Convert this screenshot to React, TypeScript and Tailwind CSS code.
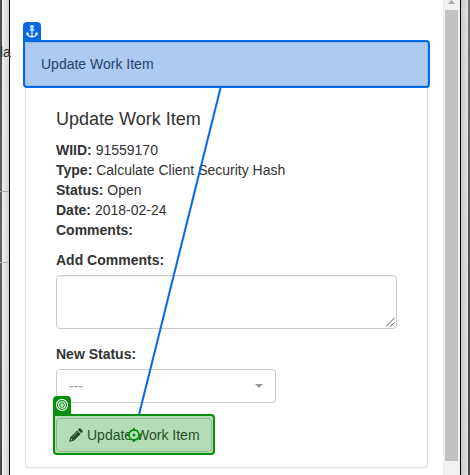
import React from "react";

function Edge({ side }: { side: "left" | "right" }) {
  if (side === "left") {
    return (
      <div className="relative flex w-[10px] shrink-0">
        <div className="w-[2px] bg-linear-to-b from-[#4c4c4c] via-[#666] to-[#484848]" />
        <div className="w-[7px] bg-linear-to-r from-[#f0f0f0] to-[#d2d2d2]" />
        <div className="w-px bg-black" />
        <div className="absolute left-0 top-[191px] h-px w-[9px] bg-[#aaa]" />
        <div className="absolute left-0 top-[262px] h-px w-[9px] bg-[#b5b5b5]" />
        <span className="absolute -left-px top-[42px] pl-px text-[14px] leading-5">la</span>
      </div>
    );
  }
  return (
    <div className="flex w-[10px] shrink-0">
      <div className="w-px bg-black" />
      <div className="w-[7px] bg-linear-to-r from-[#cacaca] to-[#e0e1e3]" />
      <div className="w-[2px] bg-linear-to-b from-[#777] via-[#555] to-[#484848]" />
    </div>
  );
}

function Scrollbar() {
  return (
    <div className="flex w-[17px] shrink-0 flex-col items-center bg-[#f1f1f1]">
      <svg width="15" height="10" viewBox="0 0 15 10" className="shrink-0">
        <path d="M4 4 L7.5 0 L11 4Z" fill="#a3a3a3" />
      </svg>
      <div className="h-[451px] w-[13px] bg-[#c1c1c1]" />
    </div>
  );
}

const details = [
  ["WIID:", "91559170"],
  ["Type:", "Calculate Client Security Hash"],
  ["Status:", "Open"],
  ["Date:", "2018-02-24"],
  ["Comments:", ""],
];

function Overlay() {
  return (
    <>
      <div className="absolute left-[23px] top-[40px] h-[48px] w-[407px] rounded-[4px] rounded-tl-none border-2 border-[#0568e4] bg-[#0568e4]/30" />
      <div className="absolute left-[23px] top-[22px] flex h-[19px] w-[18px] justify-center rounded-t-[4px] bg-[#0568e4] pt-[3px]">
        <svg width="12" height="13" viewBox="0 0 12 13" fill="none" stroke="#fff" strokeWidth="1.2">
          <circle cx="6" cy="1.9" r="1.3" />
          <path d="M6 3.2V12M3.5 5h5M1.2 8.2C1.5 10.6 3.2 11.6 6 12c2.8-.4 4.5-1.4 4.8-3.8M.5 9.6l.7-1.6 1.6 1.1M11.5 9.6l-.7-1.6-1.6 1.1" />
        </svg>
      </div>
      <svg className="absolute left-0 top-0" width="470" height="475">
        <path d="M220.5 88L139.2 414" stroke="#0568e4" strokeWidth="2" />
      </svg>
      <div className="absolute left-[53px] top-[414px] h-[41px] w-[162px] rounded-[4px] rounded-tl-none border-2 border-[#068f0c] bg-[#068f0c]/30" />
      <div className="absolute left-[53px] top-[396px] flex h-[19px] w-[18px] justify-center rounded-t-[4px] bg-[#068f0c] pt-[3px]">
        <svg width="13" height="13" viewBox="0 0 13 13" fill="none" stroke="#fff" strokeWidth="1.1">
          <circle cx="6" cy="6" r="5.5" />
          <circle cx="6" cy="6" r="3.3" />
          <circle cx="6" cy="6" r="1.1" />
        </svg>
      </div>
      <svg className="absolute left-[127px] top-[428px]" width="14" height="14" viewBox="0 0 14 14">
        <circle cx="7" cy="7" r="5" fill="#b7dfb9" stroke="#068f0c" strokeWidth="1.8" />
        <path d="M7 0v2.8M7 11.2V14M0 7h2.8M11.2 7H14" stroke="#068f0c" strokeWidth="1.9" />
        <circle cx="7" cy="7" r="1.5" fill="#068f0c" />
      </svg>
    </>
  );
}

export default function App() {
  return (
    <div className="relative flex h-[475px] w-[470px] overflow-hidden bg-white font-['Liberation_Sans',Arial,sans-serif] text-[14px] leading-5 text-[#333]">
      <Edge side="left" />
      <main className="min-w-0 flex-1 pl-[15px] pr-[15px] pt-[42px]">
        <section className="h-[426px] rounded-[4px] border border-[#ddd] shadow-[0_1px_1px_rgba(0,0,0,0.05)]">
          <header className="flex h-[43px] items-center rounded-t-[3px] border-b border-[#ddd] bg-[#f5f5f5] px-[15px]">
            Update Work Item
          </header>
          <div className="px-[30px] pt-[23px]">
            <h2 className="mb-[11px] text-[18px] leading-[20px]">Update Work Item</h2>
            {details.map(([label, value]) => (
              <p key={label}>
                <b>{label}</b> {value}
              </p>
            ))}
            <label className="mb-[5px] mt-[10px] block font-bold">Add Comments:</label>
            <div className="flex h-[54px] w-[341px] items-end justify-end rounded-[4px] border border-[#ccc] p-px shadow-[inset_0_1px_1px_rgba(0,0,0,0.075)]">
              <svg width="9" height="9" viewBox="0 0 9 9">
                <path d="M0 8.5L8.5 0M4.5 8.5L8.5 4.5" stroke="#555" strokeWidth="1" />
              </svg>
            </div>
            <label className="mb-[5px] mt-[15px] block font-bold">New Status:</label>
            <div className="flex h-[34px] w-[220px] items-center justify-between rounded-[4px] border border-[#ccc] px-3 text-[#999]">
              <span>---</span>
              <span className="border-x-4 border-t-4 border-x-transparent border-t-[#999]" />
            </div>
            <button className="mt-[15px] flex h-[34px] w-[156px] items-center rounded-[4px] border border-[#ccc] bg-white pl-[12px]">
              <svg width="14" height="14" viewBox="0 0 14 14" className="mr-[4px]" fill="#333">
                <path d="M10 .6c.5-.5 1-.5 1.5 0l2 2c.5.5.5 1 0 1.5l-1.2 1.2-3.5-3.5zM8.2 2.4l3.5 3.5-6.9 6.9L0 14l1.3-4.7zM2.1 10.6l-.5 1.8 1.8-.5z" fillRule="evenodd" />
                <path d="M3.3 9.2L8.6 3.9" stroke="#fff" strokeWidth=".6" />
              </svg>
              Update Work Item
            </button>
          </div>
        </section>
      </main>
      <Scrollbar />
      <Edge side="right" />
      <Overlay />
    </div>
  );
}
